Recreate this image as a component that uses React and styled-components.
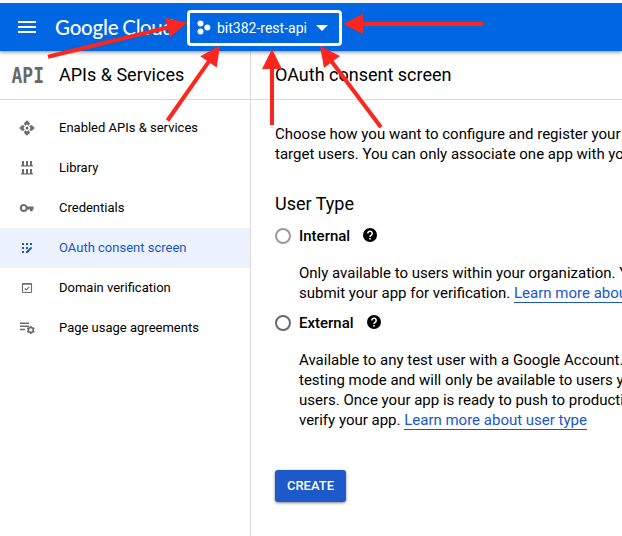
import React from "react";
import styled, { createGlobalStyle } from "styled-components";

const GlobalStyle = createGlobalStyle`
  * { box-sizing: border-box; }
  html, body { margin: 0; padding: 0; overflow: hidden; }
  body { font-family: Roboto, "Liberation Sans", sans-serif; color: #000; background: #fff; }
`;

const Page = styled.div`
  position: relative;
  display: flex;
  flex-direction: column;
  width: 622px;
  height: 536px;
  overflow: hidden;
  background: #fff;
`;

const Header = styled.header`
  display: flex;
  align-items: center;
  flex: none;
  height: 51px;
  padding-left: 18px;
  border-top: 3px solid #f7f7f7;
  background: #0066e1;
  color: #fff;
  box-shadow: 0 1px 4px rgba(0, 0, 0, 0.5);
  z-index: 1;
`;

const MenuIcon = styled.svg`
  flex: none;
  width: 18px;
  height: 12px;
`;

const Brand = styled.div`
  flex: none;
  width: 131px;
  padding-left: 19px;
  font: 500 20.5px/24px Lato, sans-serif;
  letter-spacing: -0.2px;
  white-space: nowrap;
`;

const BrandLight = styled.span`
  font-weight: 400;
  margin-left: -1px;
  letter-spacing: -0.4px;
`;

const ProjectPicker = styled.button`
  display: flex;
  align-items: center;
  width: 155px;
  height: 36px;
  margin-left: 20px;
  margin-top: 1px;
  padding: 0 0 0 7px;
  border: 3px solid #fff;
  border-radius: 4px;
  background: transparent;
  color: #fff;
  font: 400 14px/20px Roboto, sans-serif;
  white-space: nowrap;
`;

const PickerName = styled.span`
  width: 90px;
  margin: 0 9px 0 6px;
  text-align: left;
`;

const Body = styled.div`
  display: flex;
  flex: 1;
  min-height: 0;
`;

const Sidebar = styled.nav`
  flex: none;
  width: 251px;
  border-right: 1px solid #dadada;
`;

const TitleBar = styled.div`
  display: flex;
  align-items: center;
  height: 49px;
  padding-left: ${(p) => p.$indent}px;
  border-bottom: 1px solid #dadada;
  font-size: 18px;
  line-height: 24px;
  white-space: nowrap;
`;

const ProductIcon = styled.svg`
  flex: none;
  width: 34px;
  height: 30px;
  margin-right: 14px;
`;

const NavList = styled.div`
  padding-top: 8px;
`;

const NavItem = styled.div`
  display: flex;
  align-items: center;
  height: 40px;
  padding-left: 19px;
  font-size: 13px;
  color: ${(p) => (p.$active ? "#1a56ca" : "#000")};
  background: ${(p) => (p.$active ? "#ebf2fd" : "transparent")};
`;

const NavLabel = styled.span`
  padding-bottom: 2px;
`;

const NavIcon = styled.svg`
  flex: none;
  width: 16px;
  height: 16px;
  margin-right: 24px;
  color: ${(p) => (p.$active ? "#1a56ca" : "#6c6c6c")};
`;

const Main = styled.main`
  flex: 1;
  min-width: 0;
  overflow: hidden;
`;

const Content = styled.div`
  padding: 24px 0 0 24px;
`;

const Copy = styled.p`
  margin: 0;
  font-size: 15px;
  line-height: 20px;
  white-space: nowrap;
`;

const Line = styled.span`
  display: block;
`;

const SectionTitle = styled.h2`
  margin: 27px 0 0;
  font-size: 18px;
  font-weight: 400;
  line-height: 26px;
`;

const Option = styled.div`
  margin-bottom: 10px;
`;

const OptionHead = styled.div`
  display: flex;
  align-items: center;
  height: 20px;
  margin: ${(p) => p.$top}px 0 17px;
  font-size: 15px;
  font-weight: 500;
`;

const Radio = styled.span`
  width: 16px;
  height: 16px;
  margin-right: 8px;
  border: 2px solid ${(p) => (p.$muted ? "#9a9a9a" : "#6a6a6a")};
  border-radius: 50%;
`;

const HelpIcon = styled.svg`
  width: 14px;
  height: 14px;
  margin: -2px 0 0 13px;
`;

const Detail = styled(Copy)`
  padding-left: 24px;
`;

const Link = styled.a`
  color: #1a56ca;
  border-bottom: 1px solid #1a56ca;
`;

const CreateButton = styled.button`
  width: 71px;
  height: 32px;
  margin-top: 30px;
  padding: 0;
  border: 0;
  border-radius: 3px;
  background: #1d59c9;
  color: #fff;
  font: 500 13px/32px Roboto, sans-serif;
  box-shadow: 0 1px 3px rgba(0, 0, 0, 0.5);
`;

const Overlay = styled.svg`
  position: absolute;
  inset: 0;
  z-index: 2;
  pointer-events: none;
`;

function Arrow({ from, to }) {
  const [x1, y1] = from;
  const [x2, y2] = to;
  const length = Math.hypot(x2 - x1, y2 - y1);
  const ux = (x2 - x1) / length;
  const uy = (y2 - y1) / length;
  const bx = x2 - ux * 20;
  const by = y2 - uy * 20;
  return (
    <g fill="#fb261d" stroke="#fb261d">
      <line x1={x1} y1={y1} x2={bx + ux} y2={by + uy} strokeWidth="4" />
      <polygon
        stroke="none"
        points={`${x2},${y2} ${bx - uy * 10},${by + ux * 10} ${bx + uy * 10},${by - ux * 10}`}
      />
    </g>
  );
}

const arrows = [
  { from: [48, 56.8], to: [187, 22.8] },
  { from: [167.5, 120.5], to: [220, 45.5] },
  { from: [272, 125], to: [272, 49] },
  { from: [381, 127.3], to: [320, 46] },
  { from: [483, 24], to: [343, 24] },
];

const icons = {
  enabled: (
    <g fill="currentColor">
      <path d="M8 .3 10.8 3.1V4.5L9.4 5.7 8 4.3 6.6 5.7 5.2 4.5V3.1ZM8 15.7 10.8 12.9V11.5L9.4 10.3 8 11.7 6.6 10.3 5.2 11.5V12.9ZM.3 8 3.1 5.2H4.5L5.7 6.6 4.3 8 5.7 9.4 4.5 10.8H3.1ZM15.7 8 12.9 5.2H11.5L10.3 6.6 11.7 8 10.3 9.4 11.5 10.8H12.9Z" />
      <circle cx="8" cy="8" r="1.5" />
    </g>
  ),
  library: (
    <path
      fill="currentColor"
      d="M2 5.2H14V6.6H2ZM3 1H5V5.5H3ZM7 1H9V5.5H7ZM11 1H13V5.5H11ZM2 13.2H14V14.6H2ZM3 9H5V13.5H3ZM7 9H9V13.5H7ZM11 9H13V13.5H11Z"
    />
  ),
  key: (
    <path
      fill="currentColor"
      fillRule="evenodd"
      d="M4.8 4a4 4 0 1 0 3.75 5.4H11V11.3h2.6V9.4h1V6.6H8.55A4 4 0 0 0 4.8 4Zm0 2.1a1.9 1.9 0 1 1 0 3.8 1.9 1.9 0 0 1 0-3.8Z"
    />
  ),
  consent: (
    <g fill="currentColor">
      <path d="M3 3h2v2H3zM7 3h2v2H7zM11 3h2v2h-2zM3 7h2v2H3zM7 7h2v2H7zM3 11h2v2H3z" />
      <path d="M12 6.8 13.3 8.1 8.7 13H7v-1.6Z" />
    </g>
  ),
  domain: (
    <g fill="none" stroke="currentColor">
      <rect x="3.5" y="3.5" width="9" height="9" rx=".8" strokeWidth="1.1" />
      <path d="M3.5 4H12.5" strokeWidth="1.5" />
      <path d="M5.7 8.4 7.2 9.9 10.3 6.8" strokeWidth="1.1" />
    </g>
  ),
  agreements: (
    <g fill="none" stroke="currentColor">
      <path d="M1 3.2H10.2M1 6.3H10.2M1 9.4H6" strokeWidth="1.5" />
      <circle cx="11.8" cy="10" r="2.5" strokeWidth="1.6" />
      <path
        d="M11.8 6v1.4M11.8 12.6V14M8.3 8l1.2.7M14.1 11.3l1.2.7M8.3 12l1.2-.7M14.1 8.7l1.2-.7"
        strokeWidth="1.7"
      />
    </g>
  ),
};

const navItems = [
  { icon: "enabled", label: "Enabled APIs & services" },
  { icon: "library", label: "Library" },
  { icon: "key", label: "Credentials" },
  { icon: "consent", label: "OAuth consent screen", active: true },
  { icon: "domain", label: "Domain verification" },
  { icon: "agreements", label: "Page usage agreements" },
];

function Help() {
  return (
    <HelpIcon viewBox="0 0 14 14">
      <circle cx="7" cy="7" r="7" fill="#000" />
      <path
        d="M4.8 5.5a2.2 2.2 0 1 1 3.5 1.7C7.5 7.8 7 8 7 9"
        fill="none"
        stroke="#fff"
        strokeWidth="1.5"
      />
      <path d="M6.2 10h1.6v1.6H6.2Z" fill="#fff" />
    </HelpIcon>
  );
}

export default function App() {
  return (
    <Page>
      <GlobalStyle />
      <Header>
        <MenuIcon viewBox="0 0 18 12">
          <path d="M0 0H18V2H0ZM0 5H18V7H0ZM0 10H18V12H0Z" fill="#fff" />
        </MenuIcon>
        <Brand>
          Google <BrandLight>Cloud</BrandLight>
        </Brand>
        <ProjectPicker>
          <svg width="14" height="15" viewBox="0 0 14 15" fill="#fff">
            <circle cx="3.5" cy="3.4" r="3" />
            <circle cx="10.3" cy="7.5" r="3" />
            <circle cx="3.5" cy="11.6" r="3" />
          </svg>
          <PickerName>bit382-rest-api</PickerName>
          <svg width="12" height="6" viewBox="0 0 12 6">
            <path d="M0 0H12L6 6Z" fill="#fff" />
          </svg>
        </ProjectPicker>
      </Header>
      <Body>
        <Sidebar>
          <TitleBar $indent={11}>
            <ProductIcon viewBox="0 0 34 30" role="img" aria-label="API">
              <text
                x="0.5"
                y="23"
                fill="#686868"
                fontFamily="DejaVu Sans Mono"
                fontWeight="700"
                fontSize="22"
                textLength="32.5"
                lengthAdjust="spacingAndGlyphs"
              >
                API
              </text>
            </ProductIcon>
            APIs &amp; Services
          </TitleBar>
          <NavList>
            {navItems.map((item) => (
              <NavItem key={item.label} $active={item.active}>
                <NavIcon $active={item.active} viewBox="0 0 16 16">
                  {icons[item.icon]}
                </NavIcon>
                <NavLabel>{item.label}</NavLabel>
              </NavItem>
            ))}
          </NavList>
        </Sidebar>
        <Main>
          <TitleBar $indent={24}>OAuth consent screen</TitleBar>
          <Content>
            <Copy>
              <Line>Choose how you want to configure and register your</Line>
              <Line>target users. You can only associate one app with your</Line>
            </Copy>
            <SectionTitle>User Type</SectionTitle>
            <Option>
              <OptionHead $top={9}>
                <Radio $muted />
                Internal
                <Help />
              </OptionHead>
              <Detail>
                <Line>Only available to users within your organization. You</Line>
                <Line>
                  submit your app for verification. <Link>Learn more about</Link>
                </Line>
              </Detail>
            </Option>
            <Option>
              <OptionHead $top={10}>
                <Radio />
                External
                <Help />
              </OptionHead>
              <Detail>
                <Line>Available to any test user with a Google Account.</Line>
                <Line>testing mode and will only be available to users you</Line>
                <Line>users. Once your app is ready to push to production</Line>
                <Line>
                  verify your app. <Link>Learn more about user type</Link>
                </Line>
              </Detail>
            </Option>
            <CreateButton>CREATE</CreateButton>
          </Content>
        </Main>
      </Body>
      <Overlay width="622" height="536">
        {arrows.map((arrow, i) => (
          <Arrow key={i} {...arrow} />
        ))}
      </Overlay>
    </Page>
  );
}
